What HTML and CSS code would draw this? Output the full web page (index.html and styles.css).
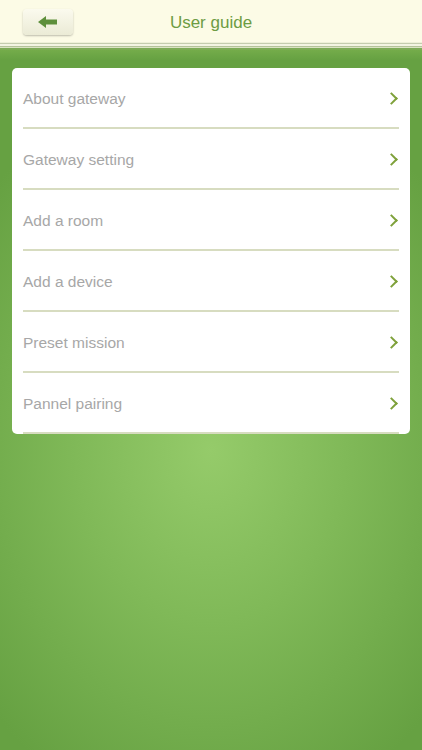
FILE: index.html
```html
<!DOCTYPE html>
<html lang="en">
<head>
    <meta charset="UTF-8">
    <meta name="viewport" content="width=device-width, initial-scale=1.0">
    <title>User guide</title>
    <link rel="stylesheet" href="styles.css">
</head>
<body>
    <div class="header">
        <div class="back">
            <svg width="20" height="12" viewBox="0 0 20 12"><path d="M0 6 L8 0 V3.5 H19 V8.5 H8 V12 Z" fill="#5e8f3c"/></svg>
        </div>
        <div class="title">User guide</div>
    </div>
    <div class="divider"></div>
    <div class="main">
        <div class="card">
            <div class="row"><span>About gateway</span><i class="arrow"></i></div>
            <div class="row"><span>Gateway setting</span><i class="arrow"></i></div>
            <div class="row"><span>Add a room</span><i class="arrow"></i></div>
            <div class="row"><span>Add a device</span><i class="arrow"></i></div>
            <div class="row"><span>Preset mission</span><i class="arrow"></i></div>
            <div class="row"><span>Pannel pairing</span><i class="arrow"></i></div>
        </div>
    </div>
</body>
</html>
```
FILE: styles.css
```css
* {
    padding: 0;
    margin: 0;
    box-sizing: border-box;
}
html, body {
    height: 100%;
}
body {
    font-family: "Liberation Sans", Arial, sans-serif;
    display: flex;
    flex-direction: column;
    background: #68a343;
}
.header {
    height: 42px;
    padding-top: 3px;
    background: #fcfbe6;
    display: flex;
    align-items: center;
    justify-content: center;
    position: relative;
}
.back {
    position: absolute;
    left: 23px;
    top: 9px;
    width: 50px;
    height: 26px;
    border-radius: 4px;
    background: linear-gradient(#fbfaee, #ebebd6);
    box-shadow: 0 1px 2px rgba(0, 0, 0, 0.25);
    display: flex;
    align-items: center;
    justify-content: center;
}
.title {
    font-size: 17px;
    color: #6d9c43;
}
.divider {
    height: 8px;
    background: linear-gradient(#eef0d8 0, #eef0d8 1px, #c4ccae 1px, #c4ccae 2px, #f3f4e2 2px, #f3f4e2 4px, #b4c29a 4px, #b4c29a 5px, #d9e2c2 5px, #d9e2c2 6px, #7dab56 6px);
}
.main {
    flex: 1;
    padding: 18px 12px 0;
    background:
        linear-gradient(#74ac4a, rgba(124, 180, 82, 0) 10px),
        radial-gradient(ellipse 300px 380px at 211px 400px, #95cb6a 0%, #80b958 45%, #66a142 100%);
}
.card {
    background: #fff;
    border-radius: 5px;
    padding: 0 11px;
}
.row {
    height: 61px;
    display: flex;
    align-items: center;
    justify-content: space-between;
    border-bottom: 2px solid #d7dcc0;
    padding-top: 2px;
    font-size: 15.5px;
    color: #a7a7a7;
}
.arrow {
    width: 9px;
    height: 9px;
    border-top: 2px solid #7ea13a;
    border-right: 2px solid #7ea13a;
    transform: rotate(45deg);
    margin-right: 3px;
}
```
